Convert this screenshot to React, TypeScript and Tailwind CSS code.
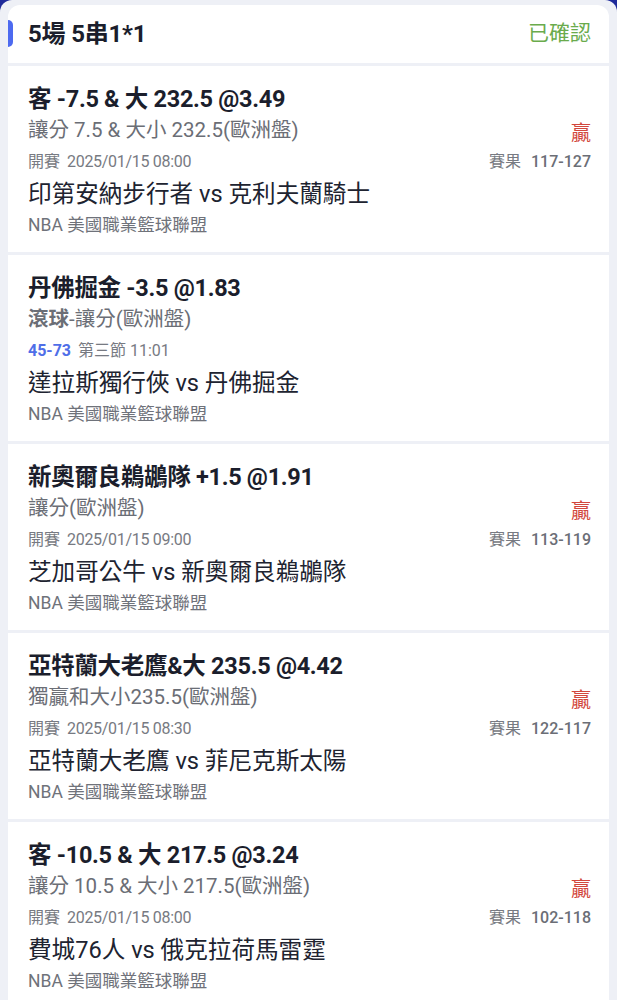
import React from 'react';

type Bet = {
    title: string;
    market: React.ReactNode;
    info: React.ReactNode;
    result?: string;
    teams: string;
    league: string;
    won?: boolean;
};

const bets: Bet[] = [
    {
        title: '客 -7.5 & 大 232.5 @3.49',
        market: '讓分 7.5 & 大小 232.5(歐洲盤)',
        info: <><span>開賽</span><span className="ml-[7px] tracking-[-0.3px]">2025/01/15 08:00</span></>,
        result: '117-127',
        teams: '印第安納步行者 vs 克利夫蘭騎士',
        league: 'NBA 美國職業籃球聯盟',
        won: true,
    },
    {
        title: '丹佛掘金 -3.5 @1.83',
        market: <><span className="font-semibold">滾球</span>-讓分(歐洲盤)</>,
        info: <><span className="font-bold text-[#4f6ee8]">45-73</span><span className="ml-[7px]">第三節 11:01</span></>,
        teams: '達拉斯獨行俠 vs 丹佛掘金',
        league: 'NBA 美國職業籃球聯盟',
    },
    {
        title: '新奧爾良鵜鶘隊 +1.5 @1.91',
        market: '讓分(歐洲盤)',
        info: <><span>開賽</span><span className="ml-[7px] tracking-[-0.3px]">2025/01/15 09:00</span></>,
        result: '113-119',
        teams: '芝加哥公牛 vs 新奧爾良鵜鶘隊',
        league: 'NBA 美國職業籃球聯盟',
        won: true,
    },
    {
        title: '亞特蘭大老鷹&大 235.5 @4.42',
        market: '獨贏和大小235.5(歐洲盤)',
        info: <><span>開賽</span><span className="ml-[7px] tracking-[-0.3px]">2025/01/15 08:30</span></>,
        result: '122-117',
        teams: '亞特蘭大老鷹 vs 菲尼克斯太陽',
        league: 'NBA 美國職業籃球聯盟',
        won: true,
    },
    {
        title: '客 -10.5 & 大 217.5 @3.24',
        market: '讓分 10.5 & 大小 217.5(歐洲盤)',
        info: <><span>開賽</span><span className="ml-[7px] tracking-[-0.3px]">2025/01/15 08:00</span></>,
        result: '102-118',
        teams: '費城76人 vs 俄克拉荷馬雷霆',
        league: 'NBA 美國職業籃球聯盟',
        won: true,
    },
];

const BetItem: React.FC<{ bet: Bet }> = ({ bet }) => (
    <div className="bg-white pl-[20px] pr-[18px] pt-[19px] pb-[12px] h-[186px] shrink-0">
        <div className="h-[30px] flex items-center text-[23.5px] font-bold text-[#1b1e2c] tracking-[-0.3px]">
            {bet.title}
        </div>
        <div className="h-[31px] flex items-center justify-between text-[20.5px] text-[#6b6e76]">
            <span>{bet.market}</span>
            {bet.won && <span className="text-[20px] text-[#d2473d] mt-[4px]">贏</span>}
        </div>
        <div className="h-[31px] flex items-center justify-between text-[16px] text-[#777a82]">
            <span className="flex items-center">{bet.info}</span>
            {bet.result && (
                <span className="flex items-center">
                    <span>賽果</span>
                    <span className="ml-[10px] font-medium text-[#6b6e76]">{bet.result}</span>
                </span>
            )}
        </div>
        <div className="h-[33px] flex items-center text-[23.6px] text-[#202330] mt-[1px]">{bet.teams}</div>
        <div className="h-[29px] flex items-center text-[17.5px] text-[#6f727a]">{bet.league}</div>
    </div>
);

export default function App() {
    return (
        <div
            className="w-[617px] h-[1000px] overflow-hidden bg-[#1f2a9a]"
            style={{ fontFamily: 'Roboto, "Noto Sans CJK TC", sans-serif' }}
        >
            <div className="h-full bg-[#eef0f6] rounded-t-[12px] pt-[5px] px-[8px]">
                <div className="flex flex-col gap-[3px] rounded-t-[12px] overflow-hidden">
                    <div className="relative bg-white h-[58px] flex items-center justify-between pl-[20px] pr-[18px]">
                        <span className="absolute left-0 top-[15px] w-[5px] h-[27px] rounded-r-full bg-[#4d6af0]" />
                        <span className="text-[24px] font-bold text-[#1b1e2c] tracking-[-0.2px]">5場 5串1*1</span>
                        <span className="text-[21px] text-[#6aab4c]">已確認</span>
                    </div>
                    {bets.map((b, i) => (
                        <BetItem key={i} bet={b} />
                    ))}
                </div>
            </div>
        </div>
    );
}
